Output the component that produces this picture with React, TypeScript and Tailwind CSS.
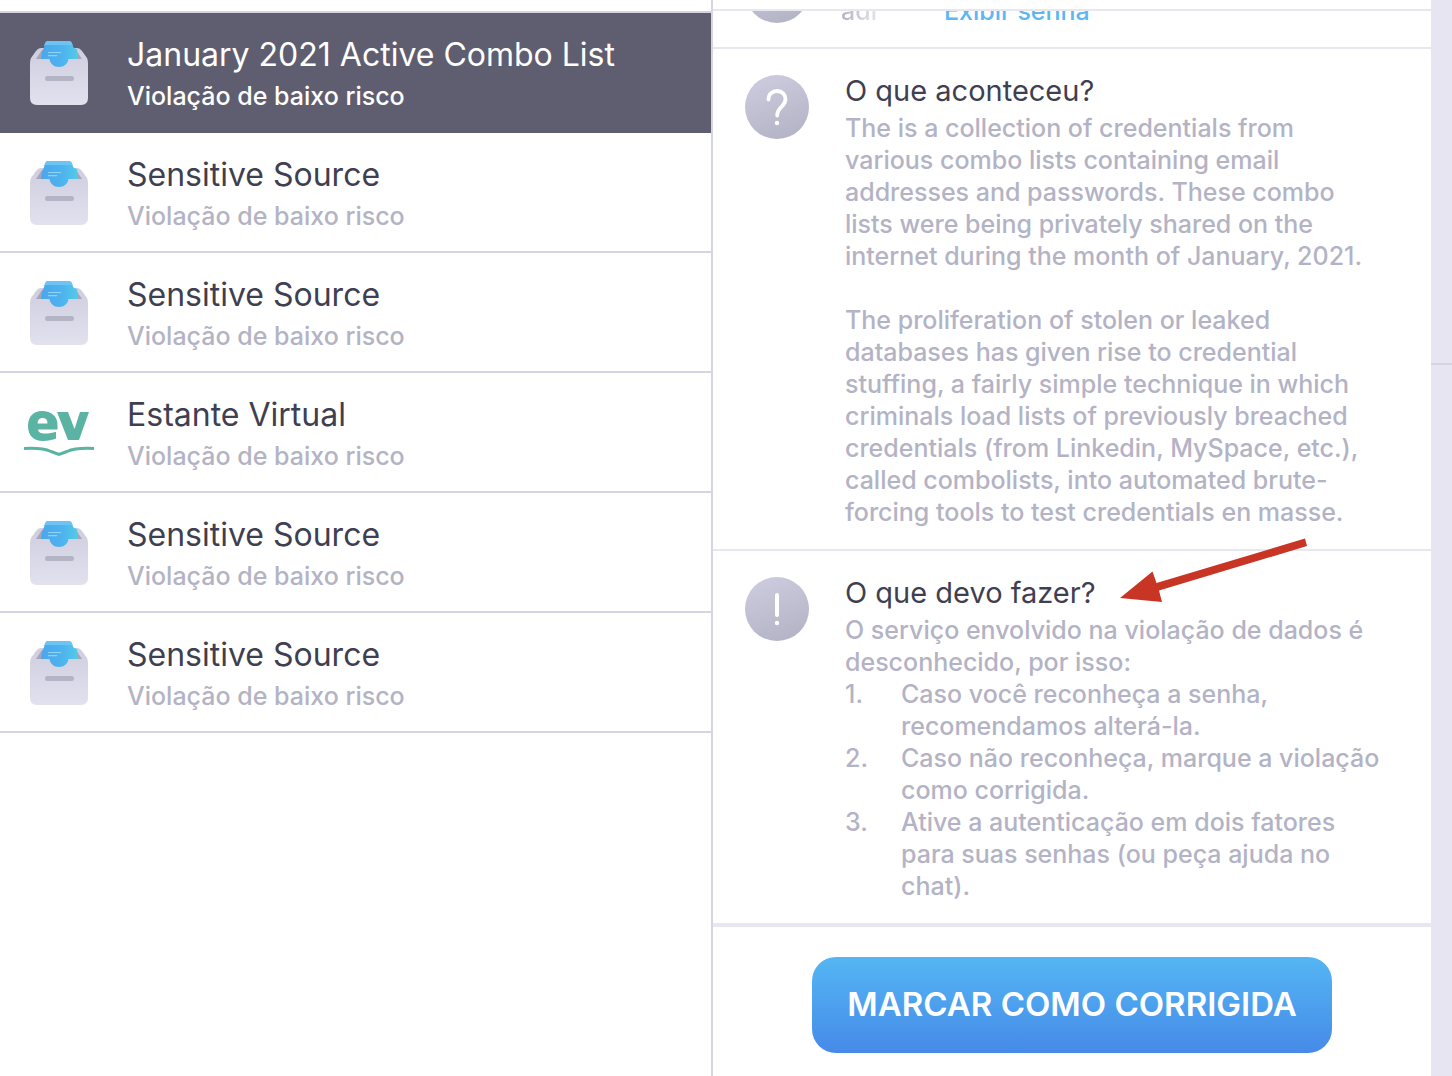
import React, { useState } from "react";

type Breach = { title: string; risk: string; logo: "box" | "ev" };

const LOW_RISK = "Violação de baixo risco";

const breaches: Breach[] = [
  { title: "January 2021 Active Combo List", risk: LOW_RISK, logo: "box" },
  { title: "Sensitive Source", risk: LOW_RISK, logo: "box" },
  { title: "Sensitive Source", risk: LOW_RISK, logo: "box" },
  { title: "Estante Virtual", risk: LOW_RISK, logo: "ev" },
  { title: "Sensitive Source", risk: LOW_RISK, logo: "box" },
  { title: "Sensitive Source", risk: LOW_RISK, logo: "box" },
];

function BoxIcon({ id }: { id: string }) {
  return (
    <svg width="58" height="66" viewBox="0 0 58 66" aria-hidden="true">
      <defs>
        <linearGradient id={`${id}-body`} x1="0" y1="0" x2="0" y2="1">
          <stop offset="0" stopColor="#cfcedf" />
          <stop offset="1" stopColor="#e2e1ee" />
        </linearGradient>
        <linearGradient id={`${id}-paper`} x1="0" y1="0" x2="1" y2="0">
          <stop offset="0" stopColor="#4ba6ec" />
          <stop offset="0.6" stopColor="#4fb4ee" />
          <stop offset="1" stopColor="#52cbe6" />
        </linearGradient>
      </defs>
      <path d="M11 8H47Q50 8 52 11L57 18Q58 20 58 23V58Q58 65 51 65H7Q0 65 0 58V23Q0 20 1 18L6 11Q8 8 11 8Z" fill={`url(#${id}-body)`} />
      <path d="M12 10H46L52 19H6Z" fill="#a5a6b6" />
      <path d="M17 1H40Q41 1 42 3L43 6H14L15 3Q16 1 17 1Z" fill="#6cc4f4" />
      <path d="M15 5H42L44 8L47 9L48 19H38.500C38 23.500 34 27 29 27S20 23.500 19.500 19H11L12 12Z" fill={`url(#${id}-paper)`} />
      <path d="M18 12.500H31M18 15.700H27" stroke="#8bd6f6" strokeWidth="1.200" />
      <rect x="15" y="36" width="29" height="5" rx="2.500" fill="#b3b4c6" />
    </svg>
  );
}

function EvLogo() {
  return (
    <svg width="72" height="52" viewBox="0 0 72 52" fill="none" aria-hidden="true">
      <path
        fillRule="evenodd"
        fill="#5bb3a4"
        d="M19 4C28 4 34.500 9 34.500 18V22.500H15C15.500 25.500 18 26.500 22 26.500C26 26.500 29.500 25.800 33 24.700V31.500C29.500 33 25 34 20 34C10.500 34 5 28.500 5 19C5 9.500 10.500 4 19 4ZM14.500 16.500H24.500C24.500 12.800 22.800 11 19.700 11C16.600 11 14.800 12.800 14.500 16.500Z"
      />
      <path d="M34 5H45L51.500 22L57 5H66L56 33H45Z" fill="#5bb3a4" />
      <path d="M1 41.500Q19 40.500 28 44.500L36 47.500L44 44.500Q53 40.500 71 41.500" stroke="#5bb3a4" strokeWidth="3" />
    </svg>
  );
}

function RoundIcon({ mark }: { mark?: "question" | "exclamation" }) {
  return (
    <div className="flex size-16 shrink-0 items-center justify-center rounded-full bg-linear-160 from-[#cfcee0] to-[#b0b1c3]">
      <svg width="64" height="64" viewBox="0 0 64 64" fill="none" aria-hidden="true">
        {mark === "question" && (
          <>
            <path d="M23.500 24.500C23.500 19 27.500 16 32.200 16C37 16 40.500 19.500 40.500 24C40.500 32 32.200 32 32.200 40.500" stroke="#fff" strokeWidth="3.800" strokeLinecap="round" />
            <circle cx="32" cy="48" r="2.200" fill="#fff" />
          </>
        )}
        {mark === "exclamation" && (
          <>
            <path d="M32 18V38" stroke="#fff" strokeWidth="4" strokeLinecap="round" />
            <circle cx="32" cy="46" r="2.200" fill="#fff" />
          </>
        )}
      </svg>
    </div>
  );
}

function Arrow() {
  return (
    <svg className="pointer-events-none absolute -top-10 left-full ml-6" width="190" height="68" viewBox="0 0 190 68" aria-hidden="true">
      <path d="M1 61L33.500 34.500L37.500 46L186 1.500L188 9L40 53.500L43 65Z" fill="#c83524" />
    </svg>
  );
}

function Section({ mark, title, children, last, arrow }: { mark: "question" | "exclamation"; title: string; children: React.ReactNode; last?: boolean; arrow?: boolean }) {
  return (
    <section className={`flex gap-9 pt-[26px] pr-11 pb-[21px] pl-8 ${last ? "" : "border-b-2 border-[#e8e7ef]"}`}>
      <RoundIcon mark={mark} />
      <div className="min-w-0 flex-1">
        <h2 className="relative w-fit text-[29px] leading-8 whitespace-nowrap text-[#3f3f51]">
          {title}
          {arrow && <Arrow />}
        </h2>
        <div className="mt-[5px] text-[25px] leading-8 font-medium text-[#b3b3c5]">{children}</div>
      </div>
    </section>
  );
}

export default function App() {
  const [selected, setSelected] = useState(0);
  return (
    <div className="flex min-h-screen bg-white font-['Inter',sans-serif]">
      <nav className="min-w-0 flex-[711] border-r-2 border-[#d5d4e2] pt-[11px]">
        <ul className="border-t-2 border-[#d5d4e2]">
          {breaches.map((b, i) => {
            const active = i === selected;
            return (
              <li key={i}>
                <button
                  type="button"
                  onClick={() => setSelected(i)}
                  className={`flex h-[120px] w-full items-center border-b-2 pt-0.5 pl-[23px] text-left ${active ? "border-[#5f5e70] bg-[#5f5e70] text-white" : "border-[#d5d4e2] text-[#3f3f51]"}`}
                >
                  <span className="mr-8 flex w-[72px] shrink-0 justify-center">
                    {b.logo === "box" ? <BoxIcon id={`box${i}`} /> : <EvLogo />}
                  </span>
                  <span className="min-w-0 pt-1.5">
                    <span className="block text-[32px] leading-10">{b.title}</span>
                    <span className={`block text-[25px] leading-[42px] font-medium ${active ? "text-white" : "text-[#b3b3c5]"}`}>{b.risk}</span>
                  </span>
                </button>
              </li>
            );
          })}
        </ul>
      </nav>

      <main className="flex min-w-0 flex-[718] flex-col">
        <div className="h-[11px] border-b-2 border-[#e8e7ef]" />
        <div className="flex h-[38px] items-end overflow-hidden border-b-2 border-[#e8e7ef] pl-8 text-[25px] leading-8 font-medium">
          <div className="mb-6">
            <RoundIcon />
          </div>
          <span className="mb-5 ml-8 w-[103px] bg-linear-to-r from-[#b3b3c5] to-transparent to-55% bg-clip-text text-transparent">adr</span>
          <a href="#senha" className="mb-5 text-[#5bb8f2]">Exibir senha</a>
        </div>

        <Section mark="question" title="O que aconteceu?">
          <p>
            The is a collection of credentials from various combo lists containing email addresses and passwords. These combo lists were being privately shared on the internet during the month of January, 2021.
          </p>
          <p className="mt-8">
            The proliferation of stolen or leaked databases has given rise to credential stuffing, a fairly simple technique in which criminals load lists of previously breached credentials (from Linkedin, MySpace, etc.), called combolists, into automated brute-forcing tools to test credentials en masse.
          </p>
        </Section>

        <Section mark="exclamation" title="O que devo fazer?" last arrow>
          <p>O serviço envolvido na violação de dados é desconhecido, por isso:</p>
          <ol>
            {[
              "Caso você reconheça a senha, recomendamos alterá-la.",
              "Caso não reconheça, marque a violação como corrigida.",
              "Ative a autenticação em dois fatores para suas senhas (ou peça ajuda no chat).",
            ].map((t, i) => (
              <li key={i} className="flex">
                <span className="w-14 shrink-0">{i + 1}.</span>
                <span>{t}</span>
              </li>
            ))}
          </ol>
        </Section>

        <footer className="flex flex-1 items-start justify-center border-t-4 border-[#e8e7ef] px-8 pt-[30px] pb-[23px]">
          <button type="button" className="h-24 w-full max-w-[520px] rounded-3xl bg-linear-to-b from-[#55b6f3] to-[#468ae8] text-[33px] font-semibold whitespace-nowrap text-white">
            MARCAR COMO CORRIGIDA
          </button>
        </footer>
      </main>

      <aside className="w-[21px] shrink-0 bg-[#e6e5f1]">
        <div className="h-[365px] border-b-2 border-[#d5d4e2]" />
      </aside>
    </div>
  );
}
